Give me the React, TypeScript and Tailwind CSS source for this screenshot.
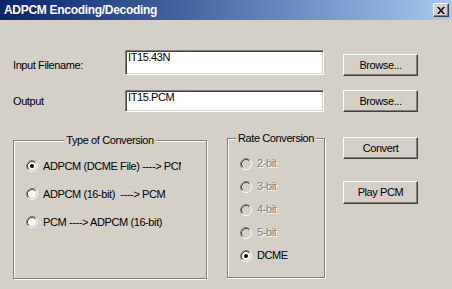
// @ts-nocheck
'use client'

import { useState } from 'react'

const ui = "font-['Liberation_Sans',Arial,sans-serif] text-[11px] tracking-[-0.4px] text-black"

function Radio({ checked, disabled }: { checked?: boolean; disabled?: boolean }) {
  return (
    <svg width="12" height="12" viewBox="0 0 12 12" className="shrink-0">
      <circle cx="6" cy="6" r="4.2" fill={disabled ? '#d4d0c8' : '#ffffff'} />
      <path d="M2.11 9.89 A5.5 5.5 0 0 1 9.89 2.11" fill="none" stroke="#808080" />
      <path d="M9.89 2.11 A5.5 5.5 0 0 1 2.11 9.89" fill="none" stroke="#ffffff" />
      <path d="M2.82 9.18 A4.5 4.5 0 0 1 9.18 2.82" fill="none" stroke="#404040" />
      <path d="M9.18 2.82 A4.5 4.5 0 0 1 2.82 9.18" fill="none" stroke="#d4d0c8" />
      {checked && <circle cx="6" cy="6" r="2" fill="#000" />}
    </svg>
  )
}

function Button({ label, className = '' }: { label: string; className?: string }) {
  return (
    <button
      className={`w-[75px] flex items-center justify-center bg-[#d4d0c8] border border-t-white border-l-white border-r-[#404040] border-b-[#404040] shadow-[inset_-1px_-1px_0_#808080] ${className}`}
    >
      {label}
    </button>
  )
}

function TextBox({ value, className = '' }: { value: string; className?: string }) {
  return (
    <div
      className={`w-[199px] bg-white border border-t-[#808080] border-l-[#808080] border-r-white border-b-white shadow-[inset_1px_1px_0_#404040,inset_-1px_-1px_0_#d4d0c8] pl-[2px] pt-[1px] leading-[11px] ${className}`}
    >
      {value}
    </div>
  )
}

function Group({ title, className = '', children }) {
  return (
    <div className={`relative border border-[#808080] shadow-[1px_1px_0_#fff,inset_1px_1px_0_#fff] ${className}`}>
      <span className="absolute -top-[8px] left-1/2 -translate-x-1/2 bg-[#d4d0c8] px-[2px] leading-[14px] whitespace-nowrap">
        {title}
      </span>
      {children}
    </div>
  )
}

export default function App() {
  const [mode, setMode] = useState(0)
  const [rate, setRate] = useState(4)

  const conversions = ['ADPCM (DCME File) ----> PCM', 'ADPCM (16-bit)  ----> PCM', 'PCM ----> ADPCM (16-bit)']
  const rates = ['2-bit', '3-bit', '4-bit', '5-bit', 'DCME']

  return (
    <div className={`w-[452px] h-[289px] bg-[#d4d0c8] overflow-hidden flex flex-col ${ui}`}>
      {/* title bar */}
      <div className="h-[20px] flex items-center justify-between bg-gradient-to-r from-[#0a246a] to-[#a6caf0] pl-[4px] pr-[3px]">
        <span className="text-white font-bold text-[12px] tracking-[-0.3px]">ADPCM Encoding/Decoding</span>
        <button className="w-[16px] h-[14px] flex items-center justify-center bg-[#d4d0c8] border border-t-white border-l-white border-r-[#404040] border-b-[#404040] shadow-[inset_-1px_-1px_0_#808080]">
          <svg width="8" height="7" viewBox="0 0 8 7">
            <path d="M0 0h2l2 2.5L6 0h2L5 3.5 8 7H6L4 4.5 2 7H0l3-3.5z" fill="#000" />
          </svg>
        </button>
      </div>

      <div className="pl-[13px]">
        {/* input row */}
        <div className="flex items-start mt-[30px]">
          <div className="w-[112px] pt-[9px] leading-[13px]">Input Filename:</div>
          <TextBox value="IT15.43N" className="h-[25px]" />
          <Button label="Browse..." className="ml-[19px] mt-[4px] h-[22px]" />
        </div>

        {/* output row */}
        <div className="flex items-start mt-[14px]">
          <div className="w-[112px] pt-[5px] leading-[13px]">Output</div>
          <TextBox value="IT15.PCM" className="h-[22px]" />
          <Button label="Browse..." className="ml-[19px] h-[22px]" />
        </div>

        {/* lower section */}
        <div className="flex items-start mt-[25px]">
          <Group title="Type of Conversion" className="w-[194px] h-[139px] mt-[3px]">
            <div className="flex flex-col pt-[11px] pl-[12px]">
              {conversions.map((c, i) => (
                <div key={c} className="h-[28px] flex items-center" onClick={() => setMode(i)}>
                  <Radio checked={mode === i} />
                  <span className="ml-[5px] w-[138px] overflow-hidden whitespace-pre">{c}</span>
                </div>
              ))}
            </div>
          </Group>

          <Group title="Rate Conversion" className="w-[98px] h-[140px] mt-[1px] ml-[20px]">
            <div className="flex flex-col pt-[13px] pl-[12px]">
              {rates.map((r, i) => {
                const disabled = i < 4
                return (
                  <div key={r} className="h-[23px] flex items-center" onClick={() => !disabled && setRate(i)}>
                    <Radio checked={rate === i} disabled={disabled} />
                    <span
                      className={`ml-[5px] ${disabled ? 'text-[#808080] [text-shadow:1px_1px_0_#fff]' : ''}`}
                    >
                      {r}
                    </span>
                  </div>
                )
              })}
            </div>
          </Group>

          <div className="flex flex-col ml-[18px] gap-[22px]">
            <Button label="Convert" className="h-[22px]" />
            <Button label="Play PCM" className="h-[23px]" />
          </div>
        </div>
      </div>
    </div>
  )
}
